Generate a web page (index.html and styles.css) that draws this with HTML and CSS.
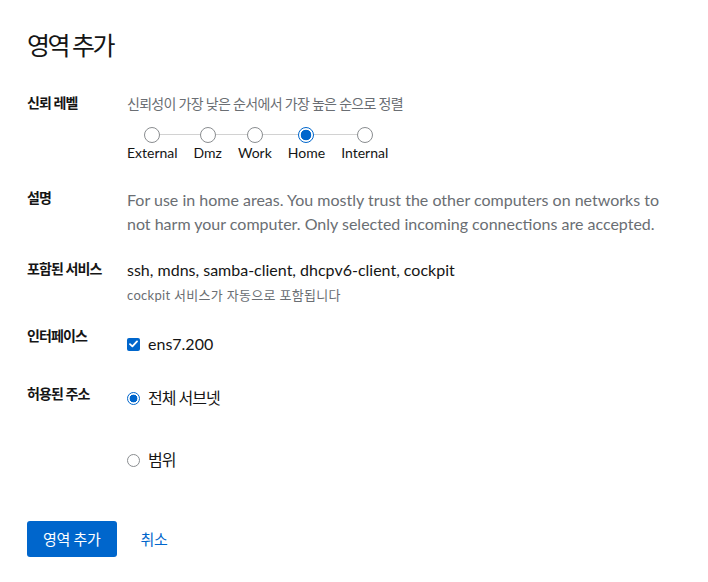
FILE: index.html
```html
<!DOCTYPE html>
<html lang="ko">
<head>
<meta charset="utf-8">
<link rel="stylesheet" href="styles.css">
</head>
<body>
<div class="page">
  <h1 class="title">영역 추가</h1>
  <div class="form">
    <div class="group g-trust">
      <div class="label">신뢰 레벨</div>
      <div class="control">
        <div class="helper ko">신뢰성이 가장 낮은 순서에서 가장 높은 순으로 정렬</div>
        <div class="slider">
          <div class="step"><span class="dot"></span><span class="step-label">External</span></div>
          <div class="step"><span class="dot"></span><span class="step-label">Dmz</span></div>
          <div class="step"><span class="dot"></span><span class="step-label">Work</span></div>
          <div class="step"><span class="dot checked"></span><span class="step-label">Home</span></div>
          <div class="step"><span class="dot"></span><span class="step-label">Internal</span></div>
        </div>
      </div>
    </div>
    <div class="group g-desc">
      <div class="label">설명</div>
      <div class="control">
        <p class="desc">For use in home areas. You mostly trust the other computers on networks to not harm your computer. Only selected incoming connections are accepted.</p>
      </div>
    </div>
    <div class="group g-svc">
      <div class="label">포함된 서비스</div>
      <div class="control">
        <div class="value">ssh, mdns, samba-client, dhcpv6-client, cockpit</div>
        <div class="small-helper">cockpit 서비스가 자동으로 포함됩니다</div>
      </div>
    </div>
    <div class="group g-if">
      <div class="label">인터페이스</div>
      <div class="control">
        <label class="check-row">
          <span class="checkbox"><svg width="9" height="8" viewBox="0 0 9 8"><path d="M1 4.2 L3.4 6.4 L8 1.4" fill="none" stroke="#fff" stroke-width="1.8" stroke-linecap="round" stroke-linejoin="round"/></svg></span>
          <span class="value">ens7.200</span>
        </label>
      </div>
    </div>
    <div class="group g-addr">
      <div class="label">허용된 주소</div>
      <div class="control">
        <label class="radio-row"><span class="radio checked"></span><span class="value ko2">전체 서브넷</span></label>
        <label class="radio-row second"><span class="radio"></span><span class="value ko2">범위</span></label>
      </div>
    </div>
  </div>
  <div class="actions">
    <button class="btn-primary">영역 추가</button>
    <button class="btn-link">취소</button>
  </div>
</div>
</body>
</html>
```

FILE: styles.css
```css
* { box-sizing: border-box; }
body {
  margin: 0;
  background: #fff;
  color: #151515;
  font-family: "Lato", "Noto Sans CJK KR", sans-serif;
}
.page {
  padding: 30px 27px 0 27px;
}
.title {
  margin: 0;
  font-size: 25px;
  line-height: 30px;
  font-weight: 400;
  letter-spacing: -2.5px;
}
.form {
  display: flex;
  flex-direction: column;
}
.group {
  display: flex;
}
.label {
  width: 100px;
  flex: none;
  font-size: 14px;
  line-height: 20px;
  font-weight: 700;
  letter-spacing: -0.9px;
}
.control {
  flex: 1;
}
.ko { letter-spacing: -0.7px; }
.ko2 { letter-spacing: -1px; }
.g-trust { margin-top: 33px; }
.helper {
  font-size: 14px;
  line-height: 20px;
  color: #6a6e73;
  margin-top: 1px;
}
.slider {
  display: inline-flex;
  gap: 16px;
  margin-top: 13px;
  position: relative;
}
.slider::before {
  content: "";
  position: absolute;
  left: 26px;
  right: 26px;
  top: 7px;
  height: 1px;
  background: #d2d2d2;
}
.step {
  display: flex;
  flex-direction: column;
  align-items: center;
  position: relative;
}
.dot {
  width: 16px;
  height: 16px;
  border: 1px solid #8a8d90;
  border-radius: 50%;
  background: #fff;
}
.dot.checked {
  border: 1px solid #0066cc;
  background: radial-gradient(circle, #0066cc 0 5px, #fff 5.6px);
}
.step-label {
  font-size: 14px;
  line-height: 20px;
}
.g-desc { margin-top: 25px; }
.desc {
  margin: 0;
  font-size: 16px;
  line-height: 24px;
  color: #6a6e73;
  max-width: 545px;
}
.g-svc { margin-top: 22px; }
.g-svc .label { margin-top: 1px; }
.value {
  font-size: 16px;
  line-height: 24px;
}
.small-helper {
  margin-top: 3px;
  font-size: 13px;
  line-height: 20px;
  color: #6a6e73;
  letter-spacing: 0.3px;
}
.g-if { margin-top: 21px; }
.g-if .control { padding-top: 6px; }
.check-row, .radio-row {
  display: flex;
  align-items: center;
  gap: 8px;
}
.checkbox {
  width: 13px;
  height: 13px;
  border-radius: 2px;
  background: #0066cc;
  display: flex;
  align-items: center;
  justify-content: center;
}
.g-addr { margin-top: 28px; }
.g-addr .control { padding-top: 2px; }
.radio {
  width: 13px;
  height: 13px;
  border-radius: 50%;
  border: 1px solid #8a8d90;
  background: #fff;
}
.radio.checked {
  border-color: #0066cc;
  background: radial-gradient(circle, #0066cc 0 3.6px, #fff 4.2px);
}
.radio-row.second { margin-top: 38px; }
.actions {
  display: flex;
  align-items: center;
  gap: 8px;
  margin-top: 49px;
}
.btn-primary {
  font-family: inherit;
  font-size: 15px;
  line-height: 20px;
  padding: 8px 16px;
  height: 36px;
  border: 0;
  border-radius: 3px;
  background: #0066cc;
  color: #fff;
  letter-spacing: -0.3px;
}
.btn-link {
  font-family: inherit;
  font-size: 15px;
  line-height: 20px;
  padding: 8px 16px;
  border: 0;
  background: none;
  color: #0066cc;
  letter-spacing: -0.3px;
}
```
